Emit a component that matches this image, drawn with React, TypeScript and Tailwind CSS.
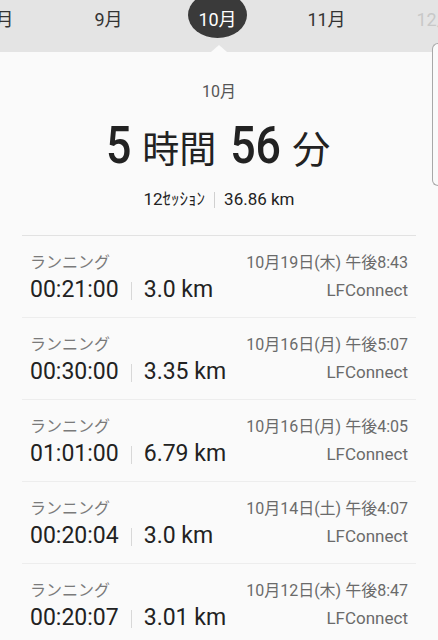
import React from 'react'

const months = ['8月', '9月', '10月', '11月', '12月']

const sessions = [
  { time: '00:21:00', dist: '3.0 km', date: '10月19日(木) 午後8:43' },
  { time: '00:30:00', dist: '3.35 km', date: '10月16日(月) 午後5:07' },
  { time: '01:01:00', dist: '6.79 km', date: '10月16日(月) 午後4:05' },
  { time: '00:20:04', dist: '3.0 km', date: '10月14日(土) 午後4:07' },
  { time: '00:20:07', dist: '3.01 km', date: '10月12日(木) 午後8:47' },
]

function MonthTabs() {
  return (
    <div className="relative h-[52px] bg-[#e4e4e4] overflow-hidden">
      <div className="flex ml-[-55px]">
        {months.map((m, i) => (
          <div key={m} className="w-[109px] shrink-0 flex justify-center">
            {m === '10月' ? (
              <div className="mt-[-8px] h-[46px] w-[59px] rounded-[50%] bg-[#3a3a3a] flex items-center justify-center pt-[8px] text-[18px] text-white">
                {m}
              </div>
            ) : (
              <div className={`h-[38px] flex items-center text-[18px] ${i === 4 ? 'text-[#c8c8c8]' : 'text-[#333]'}`}>
                {m}
              </div>
            )}
          </div>
        ))}
      </div>
      {/* notch under the selected month */}
      <div className="absolute left-[211px] bottom-0 w-0 h-0 border-l-[8px] border-r-[8px] border-b-[7px] border-l-transparent border-r-transparent border-b-[#fafafa]" />
    </div>
  )
}

// condensed-looking digits for the headline
function BigNum({ children }: { children: string }) {
  return (
    <span className="inline-block text-[52px] font-medium scale-x-[0.86] mx-[-4px]">{children}</span>
  )
}

function SessionRow({ time, dist, date, first }: { time: string; dist: string; date: string; first: boolean }) {
  return (
    <div className={`h-[82px] px-[8px] pt-[16px] border-t ${first ? 'border-[#e2e2e2]' : 'border-[#ededed]'}`}>
      <div className="flex justify-between items-center h-[22px]">
        <span className="text-[16px] text-[#7a7a7a]">ランニング</span>
        <span className="text-[16px] text-[#6a6a6a]">{date}</span>
      </div>
      <div className="flex justify-between items-center h-[30px] mt-[2px]">
        <div className="flex items-center text-[23px] text-[#222]">
          <span>{time}</span>
          <span className="mx-[12px] w-px h-[18px] bg-[#d8d8d8]" />
          <span>{dist}</span>
        </div>
        <span className="text-[17px] text-[#6a6a6a]">LFConnect</span>
      </div>
    </div>
  )
}

export default function App() {
  return (
    <div
      className="relative w-[438px] h-[640px] overflow-hidden bg-[#fafafa]"
      style={{ fontFamily: 'Roboto, "Noto Sans CJK JP", sans-serif' }}
    >
      <MonthTabs />

      {/* fast scroll handle */}
      <div className="absolute right-0 top-[43px] w-[6px] h-[143px] rounded-l-[6px] border-l border-t border-b border-[#a8a8a8] bg-[#fafafa]" />

      {/* Monthly summary */}
      <div className="flex flex-col items-center">
        <div className="mt-[28px] text-[16px] text-[#555]">10月</div>
        <div className="mt-[16px] flex items-baseline text-[#222] leading-none">
          <BigNum>5</BigNum>
          <span className="ml-[13px] text-[37px]">時間</span>
          <span className="ml-[14px]"><BigNum>56</BigNum></span>
          <span className="ml-[11px] text-[38px]">分</span>
        </div>
        <div className="mt-[15px] flex items-center text-[17px] text-[#222]">
          <span>12ｾｯｼｮﾝ</span>
          <span className="mx-[9px] w-px h-[16px] bg-[#d0d0d0]" />
          <span>36.86 km</span>
        </div>
      </div>

      {/* Session list */}
      <div className="mx-[22px] mt-[22px]">
        {sessions.map((s, i) => (
          <SessionRow key={i} {...s} first={i === 0} />
        ))}
      </div>
    </div>
  )
}
